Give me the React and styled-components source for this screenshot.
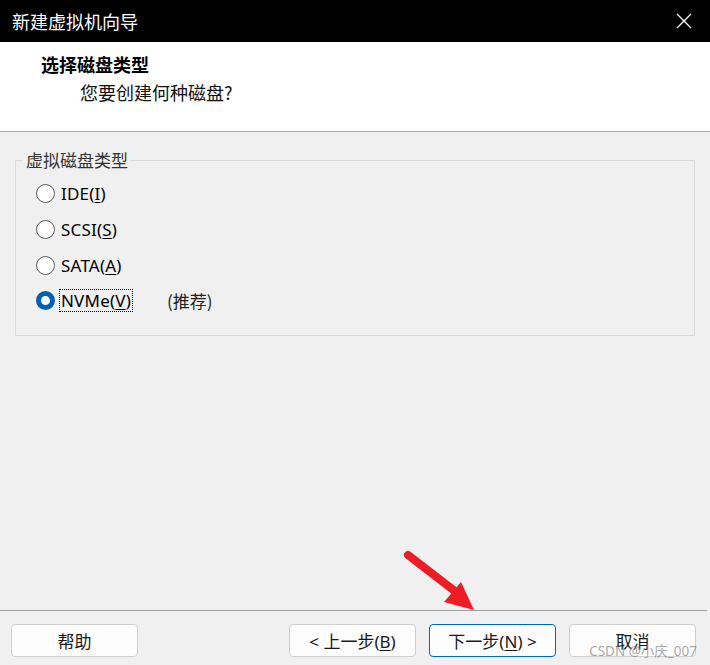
import styled, { createGlobalStyle } from "styled-components";

const GlobalStyle = createGlobalStyle`
  html, body {
    margin: 0;
    padding: 0;
    background: #f0f0f0;
  }
  body {
    font-family: "Noto Sans", "Noto Sans CJK SC", sans-serif;
  }
`;

const Window = styled.div`
  position: relative;
  width: 710px;
  height: 665px;
  display: flex;
  flex-direction: column;
  background: #f0f0f0;
  overflow: hidden;
`;

const TitleBar = styled.div`
  height: 42px;
  flex-shrink: 0;
  background: #000;
  color: #fff;
  display: flex;
  align-items: center;
  justify-content: space-between;
  padding: 0 18px 0 12px;
  font-family: "Noto Sans CJK SC", sans-serif;
  font-size: 18px;
`;

const CloseButton = styled.svg`
  width: 16px;
  height: 16px;
`;

const Header = styled.div`
  height: 90px;
  flex-shrink: 0;
  background: #fff;
  border-bottom: 1px solid #a6a6a6;
  padding: 10px 0 0 41px;
  box-sizing: border-box;
  font-family: "Noto Sans CJK SC", serif;
  color: #000;
`;

const Heading = styled.div`
  font-size: 18px;
  font-weight: 700;
  line-height: 24px;
`;

const SubHeading = styled.div`
  font-size: 18px;
  line-height: 24px;
  margin: 4px 0 0 39px;
  color: #111;
`;

const Content = styled.div`
  flex: 1;
  padding: 18px 15px 0 15px;
`;

const GroupBox = styled.fieldset`
  margin: 0;
  padding: 6px 0 16px 0;
  border: 1px solid #dadada;
  width: 680px;
  box-sizing: border-box;
`;

const Legend = styled.legend`
  margin-left: 7px;
  padding: 0 3px;
  font-family: "Noto Sans CJK SC", serif;
  font-size: 17px;
  line-height: 20px;
  color: #333;
`;

const Row = styled.label`
  height: 35.7px;
  display: flex;
  align-items: center;
  margin-left: 20px;
  font-family: "Noto Sans", sans-serif;
  font-size: 17px;
  color: #000;
`;

const Radio = styled.span`
  width: 19px;
  height: 19px;
  box-sizing: border-box;
  border-radius: 50%;
  border: ${(p) => (p.$checked ? "5px solid #005fb8" : "1px solid #5a5a5a")};
  background: #fff;
  margin-right: 4px;
  flex-shrink: 0;
`;

const Text = styled.span`
  padding: 0 1px;
  border: 1px dotted ${(p) => (p.$focused ? "#000" : "transparent")};
  line-height: 21px;
  letter-spacing: 0.2px;
`;

const Key = styled.span`
  text-decoration: underline;
  text-underline-offset: 2px;
`;

const Note = styled.span`
  margin-left: 34px;
  font-family: "Noto Sans CJK SC", sans-serif;
  font-size: 17px;
  color: #222;
`;

const Footer = styled.div`
  height: 55px;
  flex-shrink: 0;
  box-sizing: border-box;
  border-top: 1px solid #a0a0a0;
  margin-right: 3px;
  display: flex;
  align-items: flex-start;
  padding: 13px 11px 0 11px;
  gap: 13px;
`;

const Button = styled.button`
  width: 127px;
  height: 33px;
  border-radius: 4px;
  border: 1px solid ${(p) => (p.$primary ? "#0067c0" : "#cfcfcf")};
  background: #fdfdfd;
  font-family: "Noto Sans", "Noto Sans CJK SC", sans-serif;
  font-size: 17px;
  color: #1a1a1a;
  padding: 0;
  margin-left: ${(p) => (p.$push ? "auto" : "0")};
`;

const Watermark = styled.div`
  position: absolute;
  right: 13px;
  bottom: 5px;
  font-family: "Noto Sans", "Noto Sans CJK SC", sans-serif;
  font-size: 13.5px;
  color: rgba(140, 140, 140, 0.75);
  pointer-events: none;
`;

const Arrow = styled.svg`
  position: absolute;
  left: 398px;
  top: 545px;
  width: 85px;
  height: 70px;
  pointer-events: none;
`;

const options = [
  { name: "IDE", key: "I" },
  { name: "SCSI", key: "S" },
  { name: "SATA", key: "A" },
  { name: "NVMe", key: "V", checked: true },
];

export default function App() {
  return (
    <Window>
      <GlobalStyle />
      <TitleBar>
        <span>新建虚拟机向导</span>
        <CloseButton viewBox="0 0 16 16">
          <path d="M1 1 L15 15 M15 1 L1 15" stroke="#fff" strokeWidth="1.3" fill="none" />
        </CloseButton>
      </TitleBar>
      <Header>
        <Heading>选择磁盘类型</Heading>
        <SubHeading>您要创建何种磁盘?</SubHeading>
      </Header>
      <Content>
        <GroupBox>
          <Legend>虚拟磁盘类型</Legend>
          {options.map((o) => (
            <Row key={o.name}>
              <Radio $checked={o.checked} />
              <Text $focused={o.checked}>
                {o.name}(<Key>{o.key}</Key>)
              </Text>
              {o.checked && <Note>(推荐)</Note>}
            </Row>
          ))}
        </GroupBox>
      </Content>
      <Footer>
        <Button>帮助</Button>
        <Button $push>
          &lt; 上一步(<Key>B</Key>)
        </Button>
        <Button $primary>
          下一步(<Key>N</Key>) &gt;
        </Button>
        <Button>取消</Button>
      </Footer>
      <Watermark>CSDN @小庆_007</Watermark>
      <Arrow viewBox="0 0 85 70">
        <line x1="10" y1="10" x2="58" y2="47" stroke="#ee1c25" strokeWidth="8" strokeLinecap="round" />
        <polygon points="46,57 63,37 76,65" fill="#ee1c25" />
      </Arrow>
    </Window>
  );
}
